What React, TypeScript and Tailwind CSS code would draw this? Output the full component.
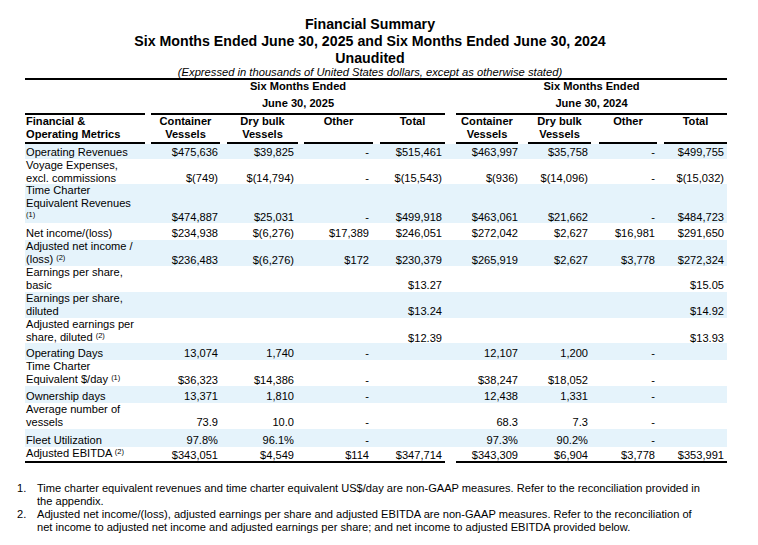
import type { ReactNode } from "react";

type Row = {
  label: ReactNode;
  h: string;
  shade?: boolean;
  v: string[];
};

const COLS = "grid grid-cols-[120px_75px_78px_75px_72px_73px_73px_66px_70px]";
const SHADE = "bg-[#e5f3fb]";

// right padding of each value column, and the gap left of each header underline
const pr = ["pr-[2px]", "pr-[4px]", "pr-[4px]", "pr-[3px]", "pr-0", "pr-[3px]", "pr-[2px]", "pr-[3px]"];
const gap = ["ml-[6px]", "ml-[7px]", "ml-[6px]", "ml-[7px]", "ml-[11px]", "ml-[10px]", "ml-[8px]", "ml-[7px]"];

function Sup({ children }: { children: ReactNode }) {
  return <span className="relative -top-[3px] text-[7.5px]">{children}</span>;
}

function Lines({ lines }: { lines: ReactNode[] }) {
  return (
    <div className="pl-[1px] whitespace-nowrap">
      {lines.map((l, i) => (
        <div key={i} className="leading-[13px]">
          {l}
        </div>
      ))}
    </div>
  );
}

const rows: Row[] = [
  {
    label: <Lines lines={["Operating Revenues"]} />,
    h: "h-[15px]",
    shade: true,
    v: ["$475,636", "$39,825", "-", "$515,461", "$463,997", "$35,758", "-", "$499,755"],
  },
  {
    label: <Lines lines={["Voyage Expenses,", "excl. commissions"]} />,
    h: "h-[25px]",
    v: ["$(749)", "$(14,794)", "-", "$(15,543)", "$(936)", "$(14,096)", "-", "$(15,032)"],
  },
  {
    label: <Lines lines={["Time Charter", "Equivalent Revenues", <Sup>(1)</Sup>]} />,
    h: "h-[39px]",
    shade: true,
    v: ["$474,887", "$25,031", "-", "$499,918", "$463,061", "$21,662", "-", "$484,723"],
  },
  {
    label: <Lines lines={["Net income/(loss)"]} />,
    h: "h-[17px]",
    v: ["$234,938", "$(6,276)", "$17,389", "$246,051", "$272,042", "$2,627", "$16,981", "$291,650"],
  },
  {
    label: <Lines lines={["Adjusted net income /", <>(loss) <Sup>(2)</Sup></>]} />,
    h: "h-[26px]",
    shade: true,
    v: ["$236,483", "$(6,276)", "$172", "$230,379", "$265,919", "$2,627", "$3,778", "$272,324"],
  },
  {
    label: <Lines lines={["Earnings per share,", "basic"]} />,
    h: "h-[26px]",
    v: ["", "", "", "$13.27", "", "", "", "$15.05"],
  },
  {
    label: <Lines lines={["Earnings per share,", "diluted"]} />,
    h: "h-[26px]",
    shade: true,
    v: ["", "", "", "$13.24", "", "", "", "$14.92"],
  },
  {
    label: <Lines lines={["Adjusted earnings per", <>share, diluted <Sup>(2)</Sup></>]} />,
    h: "h-[25px]",
    v: ["", "", "", "$12.39", "", "", "", "$13.93"],
  },
  {
    label: <Lines lines={["Operating Days"]} />,
    h: "h-[17px]",
    shade: true,
    v: ["13,074", "1,740", "-", "", "12,107", "1,200", "-", ""],
  },
  {
    label: <Lines lines={["Time Charter", <>Equivalent $/day <Sup>(1)</Sup></>]} />,
    h: "h-[26px]",
    v: ["$36,323", "$14,386", "-", "", "$38,247", "$18,052", "-", ""],
  },
  {
    label: <Lines lines={["Ownership days"]} />,
    h: "h-[17px]",
    shade: true,
    v: ["13,371", "1,810", "-", "", "12,438", "1,331", "-", ""],
  },
  {
    label: <Lines lines={["Average number of", "vessels"]} />,
    h: "h-[26px]",
    v: ["73.9", "10.0", "-", "", "68.3", "7.3", "-", ""],
  },
  {
    label: <Lines lines={["Fleet Utilization"]} />,
    h: "h-[18px]",
    shade: true,
    v: ["97.8%", "96.1%", "-", "", "97.3%", "90.2%", "-", ""],
  },
];

const ebitda = ["$343,051", "$4,549", "$114", "$347,714", "$343,309", "$6,904", "$3,778", "$353,991"];

const colHeads = [
  ["Container", "Vessels"],
  ["Dry bulk", "Vessels"],
  ["Other", ""],
  ["Total", ""],
  ["Container", "Vessels"],
  ["Dry bulk", "Vessels"],
  ["Other", ""],
  ["Total", ""],
];

export default function App() {
  return (
    <div className="w-[758px] h-[545px] bg-white text-black font-['Liberation_Sans',Arial,sans-serif] text-[11.1px]">
      <div className="ml-[25px] w-[702px]">
        {/* Title */}
        <div className="pt-[16px] pr-[12px] text-center text-[14.2px] font-bold leading-[17px]">
          <div>Financial Summary</div>
          <div className="whitespace-nowrap">Six Months Ended June 30, 2025 and Six Months Ended June 30, 2024</div>
          <div>Unaudited</div>
        </div>
        <div className="pr-[12px] text-center text-[11.2px] italic leading-[11px] whitespace-nowrap">
          (Expressed in thousands of United States dollars, except as otherwise stated)
        </div>
        <div className="border-t-2 border-black" />

        {/* Period headers */}
        <div className={COLS}>
          <div className="border-b-2 border-black" />
          <div className="col-span-4">
            <div className="ml-[6px] h-full border-b-2 border-black pb-[3px] text-center font-bold leading-[13px]">
              <div>Six Months Ended</div>
              <div className="mt-[4px]">June 30, 2025</div>
            </div>
          </div>
          <div className="col-span-4">
            <div className="ml-[11px] h-full border-b-2 border-black pb-[3px] text-center font-bold leading-[13px]">
              <div>Six Months Ended</div>
              <div className="mt-[4px]">June 30, 2024</div>
            </div>
          </div>
        </div>

        {/* Column headers */}
        <div className={COLS}>
          <div className="border-b-2 border-black pb-[1px] pl-[1px] font-bold leading-[13px] whitespace-nowrap">
            <div>Financial &amp;</div>
            <div>Operating Metrics</div>
          </div>
          {colHeads.map((c, i) => (
            <div key={i}>
              <div className={`${gap[i]} h-full border-b-2 border-black pb-[1px] text-center font-bold leading-[13px]`}>
                <div>{c[0]}</div>
                <div className="h-[13px]">{c[1]}</div>
              </div>
            </div>
          ))}
        </div>

        {/* Data rows */}
        {rows.map((r, ri) => (
          <div key={ri} className={`${COLS} items-end ${r.h} ${r.shade ? SHADE : ""}`}>
            {r.label}
            {r.v.map((val, i) => (
              <div key={i} className={`${pr[i]} text-right leading-[13px] whitespace-nowrap`}>
                {val}
              </div>
            ))}
          </div>
        ))}

        {/* Adjusted EBITDA row with closing rule */}
        <div className={`${COLS} items-end h-[16px]`}>
          <div className="border-b-2 border-black pl-[1px] leading-[12px] whitespace-nowrap">
            Adjusted EBITDA <Sup>(2)</Sup>
          </div>
          {ebitda.map((val, i) => (
            <div key={i}>
              <div
                className={`${i === 4 ? "ml-[11px]" : ""} ${pr[i]} border-b-2 border-black text-right leading-[12px] whitespace-nowrap`}
              >
                {val}
              </div>
            </div>
          ))}
        </div>
      </div>

      {/* Footnotes */}
      <div className="mt-[19px] pl-[17px] leading-[13px]">
        <div className="flex">
          <span className="w-[20px] shrink-0">1.</span>
          <span className="whitespace-nowrap">
            Time charter equivalent revenues and time charter equivalent US$/day are non-GAAP measures. Refer to the
            reconciliation provided in
            <br />
            the appendix.
          </span>
        </div>
        <div className="flex">
          <span className="w-[20px] shrink-0">2.</span>
          <span className="whitespace-nowrap">
            Adjusted net income/(loss), adjusted earnings per share and adjusted EBITDA are non-GAAP measures. Refer to
            the reconciliation of
            <br />
            net income to adjusted net income and adjusted earnings per share; and net income to adjusted EBITDA
            provided below.
          </span>
        </div>
      </div>
    </div>
  );
}
